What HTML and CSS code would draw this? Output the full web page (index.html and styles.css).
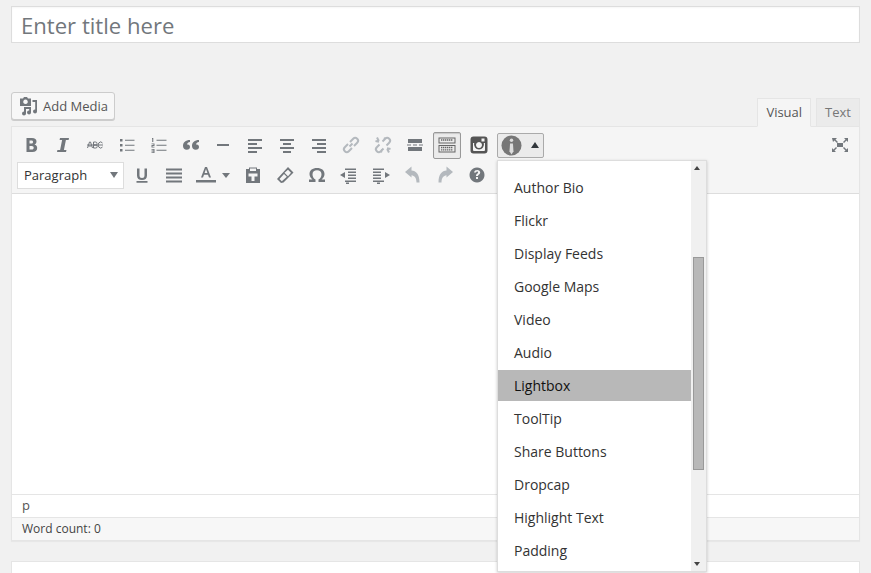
FILE: index.html
```html
<!DOCTYPE html>
<html lang="en">
<head>
<meta charset="utf-8">
<title>Editor</title>
<link rel="stylesheet" href="styles.css">
</head>
<body>
<div class="page">
  <input class="title" type="text" placeholder="Enter title here">
  <div class="tabbar">
    <button class="media">
      <svg class="ic media-ic" viewBox="0 0 20 20"><path d="M1 2.500h3l1-1.500h3l1 1.500h3V10H1zM6.500 3.500a2.300 2.300 0 1 0 .01 0z" fill-rule="evenodd"/><path d="M13.500 4H18v11.500a2 2 0 1 1-1.800-2V6h-2.700zM5 11h7v5.500a2 2 0 1 1-1.800-2V13H7v4.500a2 2 0 1 1-2-2z"/></svg>
      <span>Add Media</span>
    </button>
    <div class="tabs">
      <span class="tab on">Visual</span>
      <span class="tab">Text</span>
    </div>
  </div>
  <div class="editor">
    <div class="toolbar">
      <div class="row">
        <span class="b"><svg class="ic" viewBox="0 0 20 20"><path d="M5.500 3h5.500c3 0 4.500 1.300 4.500 3.500 0 1.500-.8 2.500-2 3 1.700.4 2.700 1.600 2.700 3.400 0 2.600-1.800 4.100-4.800 4.100H5.500zm3 2.500v3h2c1 0 1.600-.6 1.600-1.500s-.6-1.500-1.600-1.500zm0 5.400v3.600h2.300c1.200 0 1.900-.7 1.900-1.800s-.7-1.800-1.900-1.800z" fill-rule="evenodd"/></svg></span>
        <span class="b"><svg class="ic" viewBox="0 0 20 20"><path d="M7 3h9l-.4 2h-2.700l-2 10h2.600L13 17H4l.4-2h2.700l2-10H6.600z"/></svg></span>
        <span class="b"><svg class="ic" viewBox="0 0 20 20"><path d="M2.500 13l2-6h1l2 6M3.500 11h3M8.500 7v6h2.200a1.500 1.500 0 0 0 0-3H8.500m0 0h2a1.500 1.500 0 0 0 0-3h-2M17.500 8a2.500 3 0 1 0 0 4M2 10h16" fill="none" stroke="#72777c" stroke-width="1"/></svg></span>
        <span class="b"><svg class="ic" viewBox="0 0 20 20"><path d="M3 4h2.500v2.500H3zM3 9h2.500v2.500H3zM3 14h2.500v2.500H3zM8 4.700h9.500v1.100H8zM8 9.700h9.500v1.100H8zM8 14.700h9.500v1.100H8z"/></svg></span>
        <span class="b"><svg class="ic" viewBox="0 0 20 20"><path d="M7.500 4.700h10v1.100h-10zM7.500 9.700h10v1.100h-10zM7.500 14.700h10v1.100h-10zM3 3h1.300v4H3.200V4H3zM2.500 8.500h3v2.500h-2v.7h2v.8h-3V10h2v-.7h-2zM2.500 14h3v4h-3v-.8h2v-.8h-2v-.8h2v-.8h-2z"/></svg></span>
        <span class="b"><svg class="ic" viewBox="0 0 20 20"><path d="M9 5v2c-2 .3-3 1.300-3 2.500h.8c1.300 0 2.200 1 2.200 2.500s-1 2.800-3.300 2.800C3.500 14.800 2 13.200 2 11c0-3.500 2.500-6 7-6zM18 5v2c-2 .3-3 1.300-3 2.500h.8c1.300 0 2.200 1 2.200 2.500s-1 2.800-3.300 2.800c-2.200 0-3.700-1.600-3.700-3.800 0-3.500 2.500-6 7-6z"/></svg></span>
        <span class="b"><svg class="ic" viewBox="0 0 20 20"><path d="M4 9h12v2H4z"/></svg></span>
        <span class="b"><svg class="ic" viewBox="0 0 20 20"><path d="M3 4h14v2H3zM3 8h9v2H3zM3 12h14v2H3zM3 16h9v2H3z"/></svg></span>
        <span class="b"><svg class="ic" viewBox="0 0 20 20"><path d="M3 4h14v2H3zM6 8h8v2H6zM3 12h14v2H3zM6 16h8v2H6z"/></svg></span>
        <span class="b"><svg class="ic" viewBox="0 0 20 20"><path d="M3 4h14v2H3zM8 8h9v2H8zM3 12h14v2H3zM8 16h9v2H8z"/></svg></span>
        <span class="b"><svg class="ic" viewBox="0 0 20 20"><path d="M8.500 11.500l3-3M7 9l-3.200 3.200a2.800 2.800 0 0 0 4 4L11 13M9 7l3.200-3.200a2.800 2.800 0 0 1 4 4L13 11" fill="none" stroke="#b4b9be" stroke-width="2"/></svg></span>
        <span class="b"><svg class="ic" viewBox="0 0 20 20"><path d="M6.500 9.500l-2.700 2.700a2.800 2.800 0 0 0 4 4l2.700-2.700M9.500 6.500l2.700-2.700a2.800 2.800 0 0 1 4 4l-2.700 2.700M4 2.500l1.800 3.500M2.500 6l3.500.8M16 17.500L14.200 14M17.500 14l-3.500-.8M12 2.500l-1 3M8 17.500l1-3" fill="none" stroke="#b4b9be" stroke-width="2"/></svg></span>
        <span class="b"><svg class="ic" viewBox="0 0 20 20"><path d="M3 4h14v4H3zM3 12h14v4H3zM2 9.500h4v1H2zM8 9.500h4v1H8zM14 9.500h4v1h-4z"/></svg></span>
        <span class="b active"><svg class="ic" viewBox="0 0 20 20"><path d="M1.500 2.500h17v6h-17zM2.500 3.500v4h15v-4zM1.500 10h17v7.500h-17zM2.500 11v5.500h15V11z" fill-rule="evenodd" fill="#666"/><path d="M4 5h12M4 12.500h12M4 14.800h12" fill="none" stroke="#666" stroke-width="1.300" stroke-dasharray="1.400 .6"/></svg></span>
        <span class="b"><svg class="ic" viewBox="0 0 20 20"><path d="M4.500 1.500h11a3 3 0 0 1 3 3v11a3 3 0 0 1-3 3h-11a3 3 0 0 1-3-3v-11a3 3 0 0 1 3-3zM4 8v7a1 1 0 0 0 1 1h10a1 1 0 0 0 1-1V8h-1.200a5 5 0 1 1-9.600 0zM10 7a3 3 0 1 0 .01 0zM12.500 3.500v3h3v-3z" fill-rule="evenodd" fill="#555"/></svg></span>
        <span class="dropbtn">
          <svg class="info" viewBox="0 0 22 22"><circle cx="11" cy="11" r="10.500" fill="#777"/><circle cx="11" cy="5.500" r="1.800" fill="#ddd"/><path d="M9.500 9h3l.6 8-2.100 3.500L8.900 17z" fill="#ddd"/></svg>
          <i class="up"></i>
        </span>
        <span class="b full"><svg class="ic" viewBox="0 0 20 20"><path d="M7 8h6v4H7zM2 3h5L5.500 4.500 8 7 7 8 4.500 5.500 3 7zM18 3v4l-1.500-1.500L14 8l-1-1 2.500-2.500L14 3zM2 17v-4l1.500 1.500L6 12l1 1-2.500 2.500L6 17zM18 17h-4l1.500-1.500L13 13l1-1 2.500 2.500L18 13z"/></svg></span>
      </div>
      <div class="row second">
        <span class="select">Paragraph<i class="down"></i></span>
        <span class="b u"><svg class="ic" viewBox="0 0 20 20"><path d="M5 3.500h2.500v7c0 1.700.9 2.500 2.500 2.500s2.500-.8 2.500-2.500v-7H15v7c0 3.200-1.800 4.500-5 4.500s-5-1.300-5-4.500zM4.500 16h11v1.800h-11z"/></svg></span>
        <span class="b"><svg class="ic" viewBox="0 0 20 20"><path d="M2 3.500h16v2H2zM2 7.500h16v2H2zM2 11.500h16v2H2zM2 15.500h16v2H2z"/></svg></span>
        <span class="b color"><svg class="ic" viewBox="0 0 20 20"><path d="M9 2h2l4 10.500h-2l-1-2.800H8l-1 2.800H5zM8.600 8h2.800L10 4z" fill-rule="evenodd"/><path d="M0 15h20v2.500H0z"/></svg><i class="down small"></i></span>
        <span class="b"><svg class="ic" viewBox="0 0 20 20"><path d="M3 4h3V2.500h8V4h3v14H3zM7 3.500V6h6V3.500zM5.500 8.500v3h3V16h3v-4.500h3v-3z" fill-rule="evenodd"/></svg></span>
        <span class="b"><svg class="ic" viewBox="0 0 20 20"><path d="M13 2l5.500 5.500L8.500 17.500l-2.500.5L2 14zM9.500 7.700l3.500 3.500 3-3.500-3-3zM4.500 14l2.300 2.200 5-4.500-2.800-2.800z" fill-rule="evenodd"/></svg></span>
        <span class="b"><svg class="ic" viewBox="0 0 20 20"><path d="M2 17v-2.500h3.500C3.500 13 2.500 11 2.500 9c0-3.800 3-6 7.500-6s7.500 2.200 7.500 6c0 2-1 4-3 5.500H18V17h-6.500v-2.500c1.800-1 3-2.800 3-5.300 0-2.500-1.800-4-4.500-4s-4.500 1.500-4.500 4c0 2.500 1.200 4.300 3 5.300V17z"/></svg></span>
        <span class="b"><svg class="ic" viewBox="0 0 20 20"><path d="M6 3.500h11V5H6zM9 6.500h8V8H9zM9 9.500h8V11H9zM9 12.500h8V14H9zM6 15.500h11V17H6zM7 17.500h3V19H7zM1 10l5-3v6z"/></svg></span>
        <span class="b"><svg class="ic" viewBox="0 0 20 20"><path d="M2 3.500h11V5H2zM2 6.500h8V8H2zM2 9.500h8V11H2zM2 12.500h8V14H2zM2 15.500h11V17H2zM6 17.500h3V19H6zM19 10l-5-3v6z"/></svg></span>
        <span class="b"><svg class="ic" viewBox="0 0 20 20"><path d="M2 7l6.500-5.500V5.500c4.500.3 8 3.500 8 12h-3c0-4.500-2-7-5-7.300V12.500z" fill="#b4b9be"/></svg></span>
        <span class="b"><svg class="ic" viewBox="0 0 20 20"><path d="M18 7l-6.500-5.500V5.500c-4.500.3-8 3.500-8 12h3c0-4.500 2-7 5-7.300V12.500z" fill="#b4b9be"/></svg></span>
        <span class="b"><svg class="ic" viewBox="0 0 20 20"><path d="M10 2.500a7.500 7.500 0 1 0 .01 0zM7 7.500C7.300 5.800 8.500 5 10.200 5 12 5 13.200 6 13.200 7.500c0 2-2.200 2-2.200 3.500H9c0-2.400 2.100-2.400 2.100-3.500 0-.5-.4-.9-1-.9s-1 .4-1.100 1zM9 12h2v2H9z" fill-rule="evenodd"/></svg></span>
      </div>
    </div>
    <div class="content"></div>
    <div class="path">p</div>
    <div class="count">Word count: 0</div>
  </div>
  <div class="nextbox"></div>
  <div class="menu">
    <ul class="items">
      <li>Author Bio</li>
      <li>Flickr</li>
      <li>Display Feeds</li>
      <li>Google Maps</li>
      <li>Video</li>
      <li>Audio</li>
      <li class="hot">Lightbox</li>
      <li>ToolTip</li>
      <li>Share Buttons</li>
      <li>Dropcap</li>
      <li>Highlight Text</li>
      <li>Padding</li>
    </ul>
    <div class="scroll">
      <i class="sup"></i>
      <div class="thumb"></div>
      <i class="sdown"></i>
    </div>
  </div>
</div>
</body>
</html>
```
FILE: styles.css
```css
* { box-sizing: border-box; }
html, body { margin: 0; height: 100%; }
body {
  background: #f1f1f1;
  font-family: "Open Sans", sans-serif;
  color: #444;
  overflow: hidden;
}
.page {
  position: relative;
  width: 871px;
  height: 573px;
  padding: 6px 11px 0;
  overflow: hidden;
}
.title {
  display: block;
  width: 849px;
  height: 37px;
  border: 1px solid #ddd;
  background: #fff;
  padding: 3px 9px;
  font: 22.1px "Open Sans", sans-serif;
  color: #32373c;
  outline: 0;
  box-shadow: inset 0 1px 2px rgba(0,0,0,.04);
}
.title::placeholder { color: #72777c; opacity: 1; }
.tabbar {
  display: flex;
  justify-content: space-between;
  align-items: flex-end;
  height: 83px;
}
.media {
  display: flex;
  align-items: center;
  gap: 4px;
  width: 104px;
  height: 28px;
  margin-bottom: 6px;
  padding: 0 0 0 7px;
  background: #f7f7f7;
  border: 1px solid #ccc;
  border-radius: 3px;
  box-shadow: 0 1px 0 #ccc;
  font: 13px "Open Sans", sans-serif;
  color: #555;
  white-space: nowrap;
}
.media-ic { width: 20px; height: 20px; fill: #82878c; }
.tabs { display: flex; gap: 5px; position: relative; top: 1px; }
.tab {
  display: block;
  height: 29px;
  padding: 0 8px;
  border: 1px solid #e5e5e5;
  background: #ebebeb;
  font-size: 13px;
  line-height: 26px;
  color: #777;
}
.tab.on { background: #f5f5f5; border-bottom-color: #f5f5f5; color: #555; }
.editor {
  height: 415px;
  border: 1px solid #e5e5e5;
  background: #fff;
  display: flex;
  flex-direction: column;
  box-shadow: 0 1px 1px rgba(0,0,0,.04);
}
.toolbar {
  height: 67px;
  background: #f5f5f5;
  border-bottom: 1px solid #ddd;
  padding: 3px 0 0 3px;
  flex: none;
}
.row { display: flex; align-items: center; height: 30px; }
.row.second { padding-left: 2px; }
.b {
  flex: none;
  display: flex;
  align-items: center;
  justify-content: center;
  width: 32px;
  height: 30px;
}
.ic { width: 20px; height: 20px; fill: #72777c; display: block; }
.active { position: relative; }
.active::before {
  content: "";
  position: absolute;
  inset: 2px 2px 1px 2px;
  border: 1px solid #999;
  border-radius: 2px;
  background: #ebebeb;
  box-shadow: inset 0 1px 1px rgba(0,0,0,.15);
}
.active .ic { position: relative; }
.dropbtn {
  flex: none;
  display: flex;
  align-items: center;
  gap: 9px;
  width: 47px;
  height: 25px;
  margin-left: 2px;
  padding-left: 3px;
  border: 1px solid #aaa;
  border-radius: 2px;
  background: #ebebeb;
}
.info { width: 21px; height: 21px; display: block; flex: none; }
.up {
  width: 0; height: 0;
  border: 4.500px solid transparent;
  border-top: 0;
  border-bottom: 6px solid #32373c;
}
.full { margin-left: auto; margin-right: 3px; }
.select {
  flex: none;
  display: flex;
  align-items: center;
  justify-content: space-between;
  width: 107px;
  height: 27px;
  margin-right: 1px;
  padding: 0 4px 0 6px;
  background: #fff;
  border: 1px solid #ddd;
  font-size: 13px;
  color: #333;
}
.down {
  width: 0; height: 0;
  border: 4.500px solid transparent;
  border-bottom: 0;
  border-top: 6px solid #72777c;
  margin-right: 1px;
}
.down.small { border-width: 5px 4px 0; margin: 0; position: absolute; left: 32px; top: 13px; }
.color { position: relative; margin-right: 15px; }
.u { width: 33px; }
.content { flex: 1; }
.path {
  height: 23px;
  border-top: 1px solid #e5e5e5;
  padding-left: 10px;
  font-size: 13px;
  line-height: 21px;
  color: #555;
  flex: none;
}
.count {
  height: 23px;
  border-top: 1px solid #e5e5e5;
  background: #f7f7f7;
  padding-left: 10px;
  font-size: 12px;
  line-height: 21px;
  color: #444;
  flex: none;
}
.nextbox {
  height: 40px;
  margin-top: 20px;
  background: #fff;
  border: 1px solid #e5e5e5;
}
.menu {
  position: absolute;
  left: 497px;
  top: 160px;
  width: 210px;
  height: 412px;
  background: #fff;
  border: 1px solid #ddd;
  box-shadow: 0 1px 3px rgba(0,0,0,.2);
  overflow: hidden;
}
.items {
  list-style: none;
  margin: 0;
  padding: 11px 0 0;
  width: 193px;
  display: flex;
  flex-direction: column;
  gap: 2px;
}
.items li {
  height: 31px;
  line-height: 31px;
  padding-left: 16px;
  font-size: 14px;
  color: #333;
}
.items .hot { background: #b8b8b8; color: #111; }
.scroll {
  position: absolute;
  left: 193px;
  top: 0;
  width: 15px;
  height: 410px;
  background: #f0f0f0;
}
.thumb {
  position: absolute;
  left: 2px;
  top: 96px;
  width: 11px;
  height: 213px;
  background: #b8b8b8;
  border: 1px solid #999;
}
.sup, .sdown {
  position: absolute;
  left: 3px;
  width: 0; height: 0;
  border: 3.500px solid transparent;
}
.sup { top: 5px; border-top: 0; border-bottom: 4px solid #444; }
.sdown { bottom: 5px; border-bottom: 0; border-top: 4px solid #444; }
```
